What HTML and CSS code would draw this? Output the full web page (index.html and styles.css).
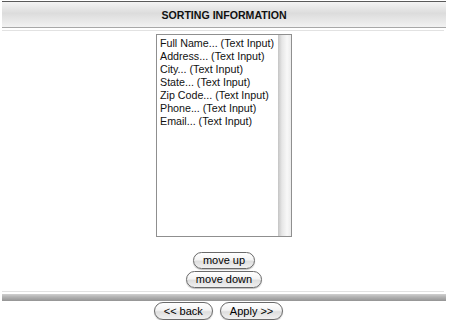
FILE: index.html
```html
<!DOCTYPE html>
<html lang="en">
<head>
  <meta charset="UTF-8" />
  <title>Sorting Information</title>
  <link rel="stylesheet" href="styles.css">
</head>
<body>
  <div class="page">
    <div class="header-bar">SORTING INFORMATION</div>
    <div class="thin-line"></div>

    <div class="list-wrap">
      <div class="listbox">
        <ul class="items">
          <li>Full Name... (Text Input)</li>
          <li>Address... (Text Input)</li>
          <li>City... (Text Input)</li>
          <li>State... (Text Input)</li>
          <li>Zip Code... (Text Input)</li>
          <li>Phone... (Text Input)</li>
          <li>Email... (Text Input)</li>
        </ul>
        <div class="scroll-track"></div>
      </div>
    </div>

    <div class="move-btns">
      <button class="pill">move up</button>
      <button class="pill">move down</button>
    </div>

    <div class="thin-line bottom"></div>
    <div class="footer-bar"></div>

    <div class="nav-btns">
      <button class="pill">&lt;&lt; back</button>
      <button class="pill">Apply &gt;&gt;</button>
    </div>
  </div>
</body>
</html>
```

FILE: styles.css
```css
body {
  margin: 0;
  background: #fff;
  font-family: 'Liberation Sans', Arial, sans-serif;
  color: #000;
}
.page {
  width: 444px;
  padding: 1px 4px 0 2px;
}
.header-bar {
  height: 25px;
  border-top: 1px solid #5a5a5a;
  border-bottom: 1px solid #a8a8a8;
  background: linear-gradient(to bottom, #f4f4f4 0%, #dcdcdc 45%, #e6e6e6 70%, #f2f2f2 100%);
  font-size: 10.6px;
  font-weight: bold;
  color: #111;
  text-align: center;
  line-height: 26px;
}
.thin-line {
  height: 1px;
  background: #e2e2e2;
  margin-top: 2px;
  margin-right: 2px;
}
.list-wrap {
  display: flex;
  justify-content: center;
  padding-top: 3px;
}
.listbox {
  display: flex;
  width: 134px;
  height: 201px;
  border: 1px solid #8f8f8f;
}
.items {
  flex: 1;
  list-style: none;
  margin: 0;
  padding: 2px 0 0 3px;
  font-size: 10.7px;
  line-height: 13px;
  color: #111;
}
.scroll-track {
  width: 13px;
  background: linear-gradient(to right, #c4c4c4 0%, #e6e6e6 30%, #f8f8f8 70%, #ececec 100%);
}
.move-btns {
  display: flex;
  flex-direction: column;
  align-items: center;
  gap: 2px;
  padding-top: 15px;
}
.pill {
  font-family: 'Liberation Sans', Arial, sans-serif;
  font-size: 11px;
  color: #000;
  height: 17px;
  padding: 0 9px;
  border: 1px solid #6a6a6a;
  border-radius: 9px;
  background: linear-gradient(to bottom, #ffffff 0%, #f4f4f4 45%, #dedede 55%, #f0f0f0 100%);
  box-shadow: 0 1px 1px rgba(0, 0, 0, 0.25);
  line-height: 15px;
  cursor: pointer;
}
.thin-line.bottom {
  margin-top: 3px;
}
.footer-bar {
  height: 7px;
  margin-top: 2px;
  background: linear-gradient(to bottom, #d0d0d0 0%, #b4b4b4 40%, #949494 100%);
}
.nav-btns {
  display: flex;
  justify-content: center;
  gap: 7px;
  padding-top: 1px;
  padding-right: 11px;
}
.nav-btns .pill {
  height: 18px;
}
```
